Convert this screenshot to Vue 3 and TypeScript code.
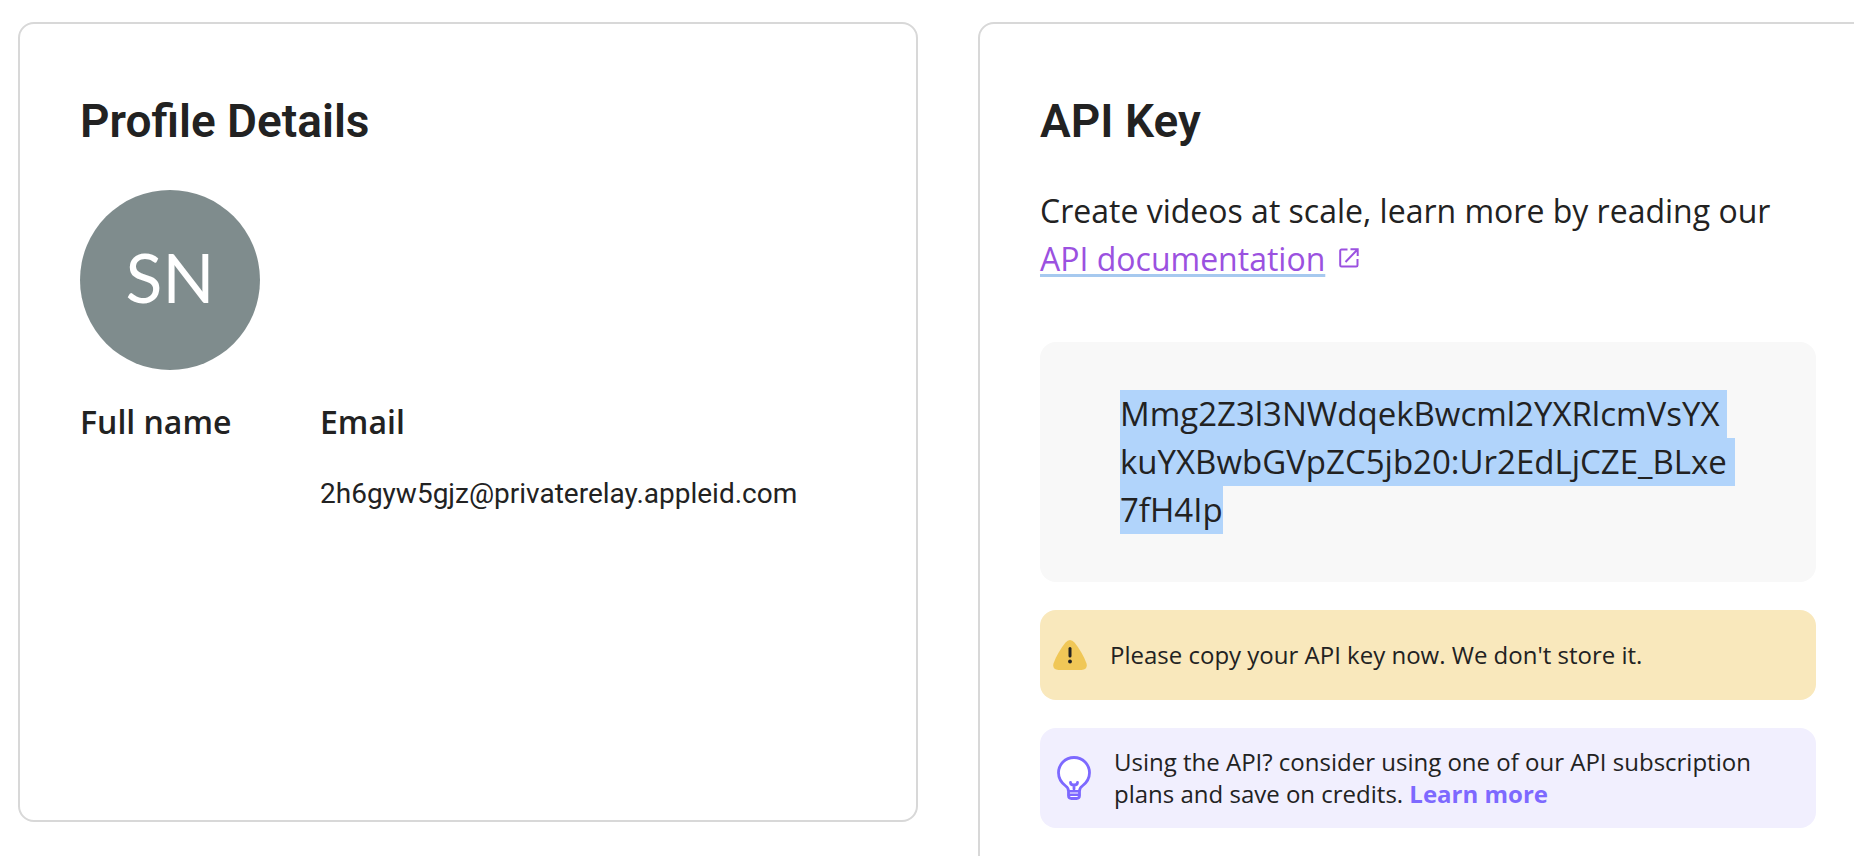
<script setup lang="ts">
interface Field {
  label: string
  value: string
}

const initials = 'SN'
const fields: Field[] = [
  { label: 'Full name', value: '' },
  { label: 'Email', value: '2h6gyw5gjz@privaterelay.appleid.com' },
]
const keyLines: string[] = [
  'Mmg2Z3l3NWdqekBwcml2YXRlcmVsYX',
  'kuYXBwbGVpZC5jb20:Ur2EdLjCZE_BLxe',
  '7fH4Ip',
]
</script>

<template>
  <main class="page">
    <section class="card profile" aria-labelledby="profile-title">
      <h2 id="profile-title">Profile Details</h2>
      <div class="avatar">{{ initials }}</div>
      <dl class="fields">
        <div v-for="f in fields" :key="f.label">
          <dt>{{ f.label }}</dt>
          <dd>{{ f.value }}</dd>
        </div>
      </dl>
    </section>

    <section class="card" aria-labelledby="api-title">
      <h2 id="api-title">API Key</h2>
      <p class="intro">
        Create videos at scale, learn more by reading our
        <a class="docs" href="#docs"><span>API documentation</span><svg
            class="external" width="20" height="20" viewBox="0 0 20 20" fill="none" stroke="currentColor"
            stroke-width="2" aria-hidden="true">
            <path d="M8.500 1.500H2.500a1.300 1.300 0 0 0-1.300 1.300v14.400a1.300 1.300 0 0 0 1.300 1.300h14.700a1.300 1.300 0 0 0 1.300-1.300V11" />
            <path d="M11.500 1.300h7.200V8M18.500 1.500 6.500 14" />
          </svg></a>
      </p>

      <code class="key"><span v-for="line in keyLines" :key="line">{{ line }}</span></code>

      <div class="note warning">
        <svg width="34" height="30" viewBox="0 0 34 30" aria-hidden="true">
          <path d="M12.300 2.800Q17-2.700 21.700 2.800C26.500 8.800 31 16.500 33.500 23.500Q35 29.500 28.500 30H5.500Q-1 29.500.500 23.500C3 16.500 7.500 8.800 12.300 2.800Z" fill="#f0c757" />
          <path d="M17 8.500V16" stroke="#222" stroke-width="3" stroke-linecap="round" />
          <circle cx="17" cy="21.500" r="1.900" fill="#222" />
        </svg>
        <p>Please copy your API key now. We don't store it.</p>
      </div>

      <div class="note tip">
        <svg width="34" height="44" viewBox="0 0 34 44" fill="none" stroke="#7d69ff" stroke-linecap="round" stroke-linejoin="round" aria-hidden="true">
          <path d="M17 1.500C8.200 1.500 1.500 8.500 1.500 16.800c0 6.200 3.200 10.200 7.200 13.200 2 1.500 2.800 3 2.800 5.200v4.300q0 3 3 3h5q3 0 3-3v-4.300c0-2.200.8-3.700 2.800-5.200 4-3 7.200-7 7.200-13.200C32.500 8.500 25.800 1.500 17 1.500Z" fill="#fff" stroke-width="2.800" />
          <path d="M12 35.200h10M12 38.800h10" stroke-width="2.400" />
          <path d="M13.500 26.500q0 2.500 3.500 2.500t3.500-2.500M17 29v4" stroke-width="2.800" />
        </svg>
        <p>
          Using the API? consider using one of our API subscription plans and save on credits.
          <a href="#plans">Learn more</a>
        </p>
      </div>
    </section>
  </main>
</template>

<style>
body {
  margin: 0;
  background: #fff;
  overflow: hidden;
}
</style>

<style scoped>
.page {
  box-sizing: border-box;
  width: calc(100% + 24px);
  min-height: 100vh;
  padding: 22px 0 0 18px;
  display: grid;
  grid-template-columns: 1fr 1fr;
  gap: 60px;
  align-items: start;
  color: #222;
  font-family: "Open Sans", "Noto Sans", sans-serif;
  font-size: 32px;
  line-height: 48px;
}

.card {
  box-sizing: border-box;
  min-width: 0;
  padding: 61px 60px 60px;
  border: 2px solid #d8d8d8;
  border-radius: 16px;
}

.profile {
  min-height: 800px;
}

h2 {
  margin: 0;
  font-family: Roboto, sans-serif;
  font-size: 46px;
  font-weight: 600;
  line-height: 72px;
}

.avatar {
  box-sizing: border-box;
  display: flex;
  align-items: center;
  justify-content: center;
  width: 180px;
  height: 180px;
  margin-top: 33px;
  padding-bottom: 6px;
  border-radius: 50%;
  background: #7f8c8d;
  color: #fff;
  font-family: Lato, sans-serif;
  font-size: 68px;
}

.fields {
  display: grid;
  grid-template-columns: 240px 1fr;
  margin: 28px 0 0;
}

dt {
  font-weight: 600;
}

dd {
  margin: 24px 0 0;
  font-family: Roboto, sans-serif;
  font-size: 28px;
}

.intro {
  margin: 30px 0 59px;
}

.docs {
  color: #9b51e0;
  text-decoration: none;
}

.docs span {
  text-decoration: underline;
  text-decoration-color: #a6c9ef;
  text-decoration-thickness: 3px;
  text-underline-offset: 3px;
  text-decoration-skip-ink: none;
}

.external {
  margin-left: 14px;
  vertical-align: 3px;
}

.key {
  display: flex;
  flex-direction: column;
  align-items: flex-start;
  padding: 48px 80px;
  border-radius: 16px;
  background: #f8f8f8;
  font-family: "Open Sans", "Noto Sans", sans-serif;
  font-size: 33px;
}

.key span {
  padding-right: 8px;
  background: #b1d4fb;
}

.key span:last-child {
  padding-right: 0;
}

.note {
  display: flex;
  align-items: center;
  margin-top: 28px;
  border-radius: 16px;
  font-size: 24px;
  line-height: 32px;
}

.note svg {
  flex: none;
}

.note p {
  margin: 0;
}

.warning {
  min-height: 90px;
  padding: 0 13px;
  gap: 23px;
  background: #f9e8bc;
}

.tip {
  min-height: 100px;
  padding: 0 17px;
  gap: 23px;
  background: #f1effe;
}

.tip a {
  color: #7d69ff;
  font-weight: 700;
  text-decoration: none;
}
</style>
